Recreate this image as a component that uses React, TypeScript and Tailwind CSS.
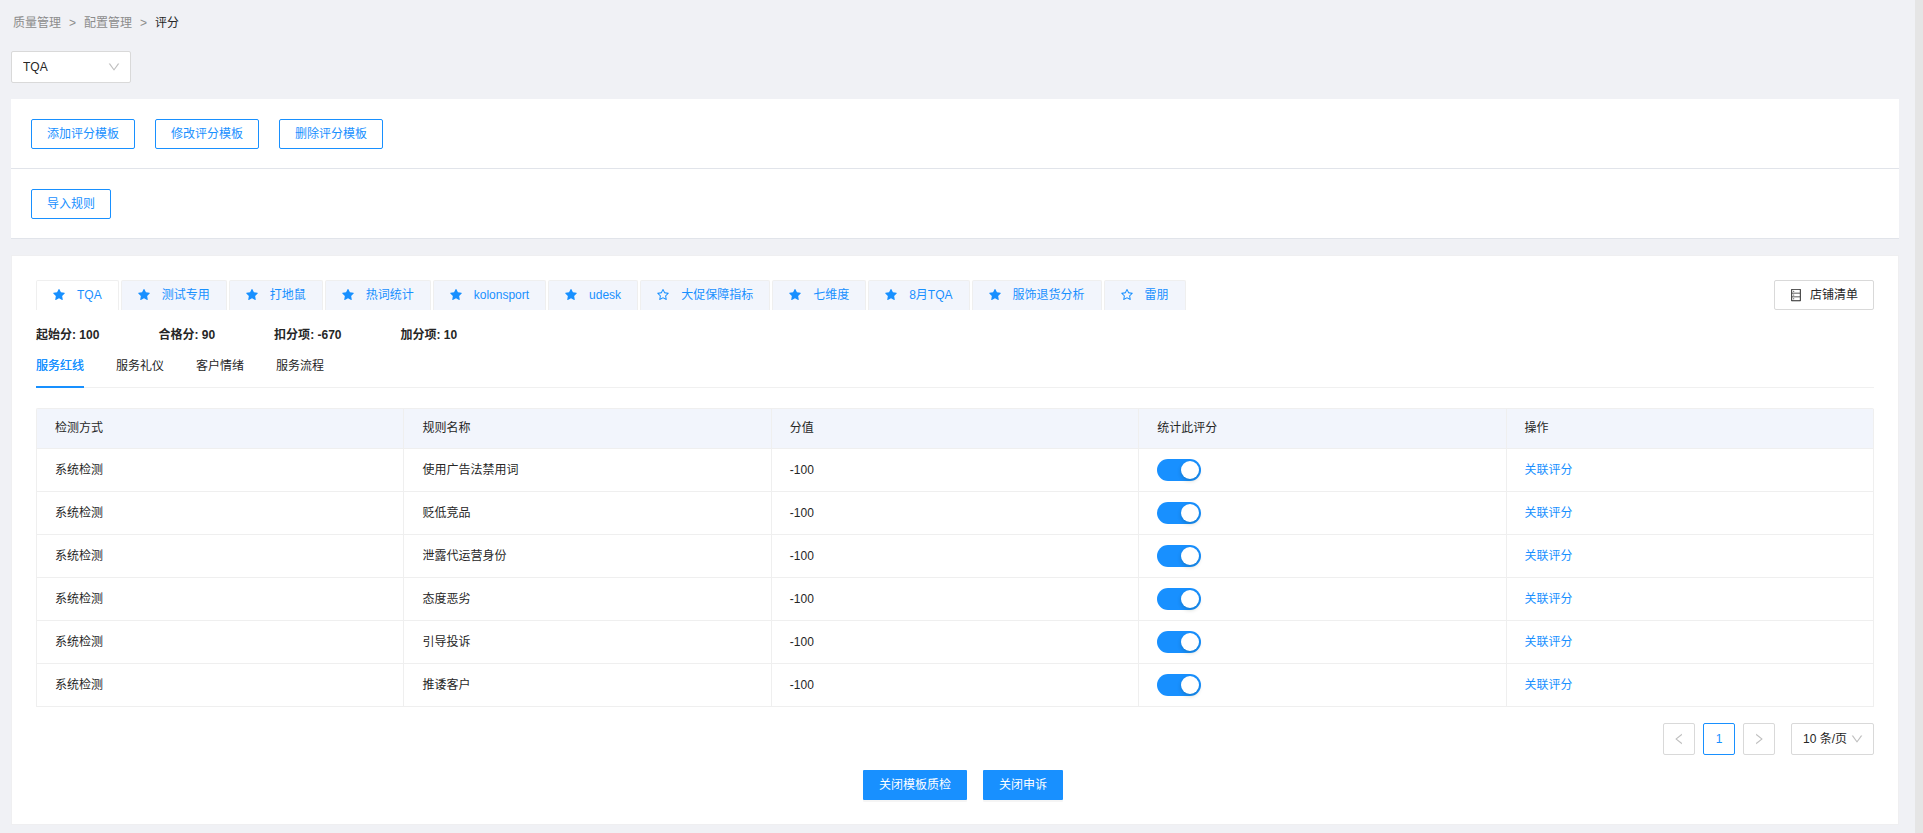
import { useState } from "react";
import type { ReactNode } from "react";
import {
  AiFillStar,
  AiOutlineDatabase,
  AiOutlineDown,
  AiOutlineLeft,
  AiOutlineRight,
  AiOutlineStar,
} from "react-icons/ai";

const templates = [
  { name: "TQA", starred: true },
  { name: "测试专用", starred: true },
  { name: "打地鼠", starred: true },
  { name: "热词统计", starred: true },
  { name: "kolonsport", starred: true },
  { name: "udesk", starred: true },
  { name: "大促保障指标", starred: false },
  { name: "七维度", starred: true },
  { name: "8月TQA", starred: true },
  { name: "服饰退货分析", starred: true },
  { name: "雷朋", starred: false },
];

const scores = [
  { label: "起始分", value: 100 },
  { label: "合格分", value: 90 },
  { label: "扣分项", value: -670 },
  { label: "加分项", value: 10 },
];

const categories = ["服务红线", "服务礼仪", "客户情绪", "服务流程"];

const columns = ["检测方式", "规则名称", "分值", "统计此评分", "操作"];

const rules = [
  "使用广告法禁用词",
  "贬低竞品",
  "泄露代运营身份",
  "态度恶劣",
  "引导投诉",
  "推诿客户",
];

function OutlineButton({ children }: { children: ReactNode }) {
  return (
    <button
      type="button"
      className="flex h-[30px] items-center rounded-[2px] border border-[#1890ff] bg-white px-[15px] text-[#1890ff]"
    >
      {children}
    </button>
  );
}

function PrimaryButton({ children }: { children: ReactNode }) {
  return (
    <button
      type="button"
      className="ml-4 flex h-[30px] items-center rounded-[1px] bg-[#1890ff] px-4 text-white shadow-[0_2px_0_rgba(0,0,0,0.04)]"
    >
      {children}
    </button>
  );
}

function SelectBox({ label, options, wide }: { label: string; options: string[]; wide?: boolean }) {
  return (
    <div className={wide ? "relative w-[120px]" : "relative w-[83px]"}>
      <select
        aria-label={label}
        className="block h-8 w-full appearance-none rounded-[2px] border border-[#d9d9d9] bg-white pl-[11px] outline-none"
      >
        {options.map((o) => (
          <option key={o}>{o}</option>
        ))}
      </select>
      <AiOutlineDown
        size={14}
        className="pointer-events-none absolute top-[9px] right-[10px] text-[#bfbfbf]"
      />
    </div>
  );
}

function RuleSwitch({ label }: { label: string }) {
  const [on, setOn] = useState(true);
  return (
    <input
      type="checkbox"
      role="switch"
      aria-label={label}
      checked={on}
      onChange={(e) => setOn(e.target.checked)}
      className="flex h-[22px] w-11 appearance-none items-center rounded-full bg-[#bfbfbf] px-[2px] before:size-[18px] before:rounded-full before:bg-white before:shadow-[0_2px_4px_rgba(0,35,11,0.2)] before:content-[''] checked:justify-end checked:bg-[#1890ff]"
    />
  );
}

export default function App() {
  const [template, setTemplate] = useState("TQA");
  const [category, setCategory] = useState("服务红线");

  return (
    <div className="flex min-h-screen bg-[#f0f1f5] font-['Liberation_Sans','Noto_Sans_CJK_SC',sans-serif] text-xs leading-[18px] text-[#262626]">
      <main className="min-w-0 flex-1 pt-[14px] pr-4 pb-2 pl-[11px]">
        <nav aria-label="breadcrumb" className="flex gap-2 pl-[2px] text-[#8c8c8c]">
          <a href="#quality">质量管理</a>
          <span>&gt;</span>
          <a href="#config">配置管理</a>
          <span>&gt;</span>
          <span className="text-[#262626]">评分</span>
        </nav>

        <div className="mt-[19px]">
          <SelectBox label="评分模板" options={["TQA"]} wide />
        </div>

        <section className="mt-4 bg-white">
          <div className="flex gap-5 border-b border-[#e1e4ea] px-5 pt-5 pb-[19px]">
            <OutlineButton>添加评分模板</OutlineButton>
            <OutlineButton>修改评分模板</OutlineButton>
            <OutlineButton>删除评分模板</OutlineButton>
          </div>
          <div className="flex gap-5 border-b border-[#e1e4ea] px-5 pt-5 pb-[19px]">
            <OutlineButton>导入规则</OutlineButton>
          </div>
        </section>

        <section className="mt-4 border border-[#efeff1] bg-white p-6">
          <div className="flex items-start justify-between">
            <div role="tablist" aria-label="模板" className="flex gap-[2px]">
              {templates.map((t) => (
                <button
                  key={t.name}
                  type="button"
                  role="tab"
                  aria-selected={t.name === template}
                  onClick={() => setTemplate(t.name)}
                  className={`flex h-[30px] items-center gap-[11px] rounded-t-[2px] border border-b-0 border-[#efefef] pr-4 pb-[2px] pl-[15px] whitespace-nowrap text-[#1890ff] ${
                    t.name === template ? "bg-white" : "bg-[#f2f5fc]"
                  }`}
                >
                  {t.starred ? <AiFillStar size={14} /> : <AiOutlineStar size={14} />}
                  {t.name}
                </button>
              ))}
            </div>
            <button
              type="button"
              className="flex h-[30px] items-center gap-[7px] rounded-[2px] border border-[#d9d9d9] bg-white pr-[15px] pl-[14px] whitespace-nowrap"
            >
              <AiOutlineDatabase size={14} />
              店铺清单
            </button>
          </div>

          <div className="mt-4 flex gap-[59px] font-bold">
            {scores.map((s) => (
              <span key={s.label}>
                {s.label}: {s.value}
              </span>
            ))}
          </div>

          <div role="tablist" aria-label="分类" className="mt-2 flex gap-8 border-b border-[#f0f0f0]">
            {categories.map((c) => (
              <button
                key={c}
                type="button"
                role="tab"
                aria-selected={c === category}
                onClick={() => setCategory(c)}
                className={`-mb-px border-b-2 pt-[5px] pb-[11px] ${
                  c === category
                    ? "border-[#1890ff] text-[#1890ff] [text-shadow:0_0_0.25px_currentcolor]"
                    : "border-transparent"
                }`}
              >
                {c}
              </button>
            ))}
          </div>

          <table className="mt-5 w-full table-fixed border-separate border-spacing-0 rounded-t-[2px] border-t border-l border-[#efefef] text-left">
            <thead>
              <tr>
                {columns.map((c) => (
                  <th
                    key={c}
                    scope="col"
                    className="h-10 border-r border-b border-[#efefef] bg-[#f2f5fc] px-[18px] pt-0 pb-[2px] font-normal"
                  >
                    {c}
                  </th>
                ))}
              </tr>
            </thead>
            <tbody>
              {rules.map((rule) => (
                <tr key={rule}>
                  <td className="h-[43px] border-r border-b border-[#efefef] px-[18px] py-0">系统检测</td>
                  <td className="border-r border-b border-[#efefef] px-[18px] py-0">{rule}</td>
                  <td className="border-r border-b border-[#efefef] px-[18px] py-0">-100</td>
                  <td className="border-r border-b border-[#efefef] px-[18px] py-0">
                    <RuleSwitch label={rule} />
                  </td>
                  <td className="border-r border-b border-[#efefef] px-[18px] py-0">
                    <a href="#link" className="text-[#1890ff]">
                      关联评分
                    </a>
                  </td>
                </tr>
              ))}
            </tbody>
          </table>

          <div className="mt-4 flex justify-end gap-2">
            <button
              type="button"
              aria-label="上一页"
              disabled
              className="grid size-8 place-items-center rounded-[2px] border border-[#d9d9d9] text-[#bfbfbf]"
            >
              <AiOutlineLeft size={14} />
            </button>
            <button
              type="button"
              aria-current="page"
              className="grid size-8 place-items-center rounded-[2px] border border-[#1890ff] text-[#1890ff]"
            >
              1
            </button>
            <button
              type="button"
              aria-label="下一页"
              disabled
              className="mr-2 grid size-8 place-items-center rounded-[2px] border border-[#d9d9d9] text-[#bfbfbf]"
            >
              <AiOutlineRight size={14} />
            </button>
            <SelectBox label="每页条数" options={["10 条/页"]} />
          </div>

          <div className="mt-[15px] flex justify-center">
            <PrimaryButton>关闭模板质检</PrimaryButton>
            <PrimaryButton>关闭申诉</PrimaryButton>
          </div>
        </section>
      </main>
      <div className="w-2 shrink-0 bg-[#e5e5e5]" />
    </div>
  );
}
